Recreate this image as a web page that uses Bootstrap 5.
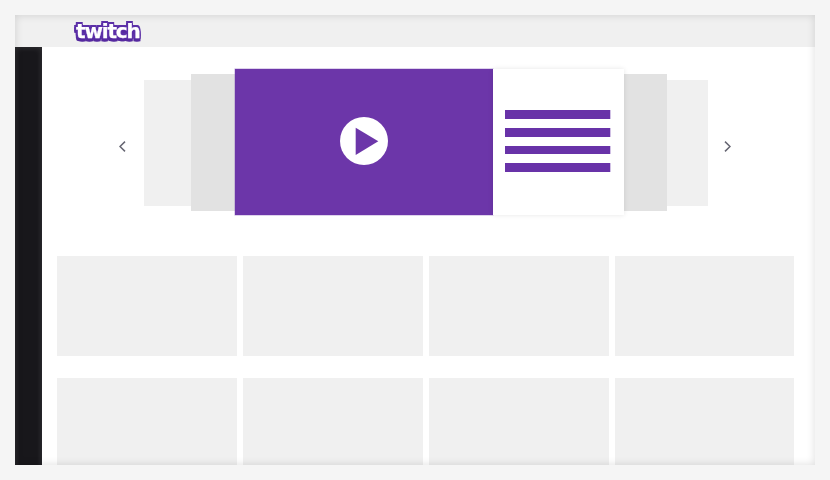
<!DOCTYPE html>
<html lang="en">
<head>
<meta charset="utf-8">
<title>Twitch</title>
<link href="https://cdn.jsdelivr.net/npm/bootstrap@5.3.0/dist/css/bootstrap.min.css" rel="stylesheet">
<style>
html,body{height:100%;}
body{background:#f5f5f5;padding:15px;overflow:hidden;font-family:"Liberation Sans",sans-serif;}
.frame{width:800px;height:450px;position:relative;overflow:hidden;background:#fff;}
.frame::after{content:"";position:absolute;inset:0;pointer-events:none;box-shadow:inset 0 0 8px rgba(0,0,0,.14);z-index:5;}
.topbar{height:32px;background:#f0f0f0;padding-left:61px;}
.brand{display:inline-block;font:900 20px/20px "DejaVu Sans",sans-serif;letter-spacing:-1.15px;color:#fff;-webkit-text-stroke:.25px #fff;margin-top:6px;filter:drop-shadow(1.7px 0 0 #5c30a8) drop-shadow(-1.7px 0 0 #5c30a8) drop-shadow(0 -1.7px 0 #5c30a8) drop-shadow(0 3.4px 0 #55299f);}
.side{width:27px;background:#18171b;box-shadow:inset 0 0 6px rgba(255,255,255,.14);}
.main-pane{padding:22px 20px 0 15px;min-width:0;}
.slider{padding-left:62px;height:146px;}
.chev{width:7px;height:11px;flex:none;margin-top:71.5px;}
.chev-l{margin-right:18px;}
.chev-r{margin-left:16px;}
.far{height:126px;margin-top:11px;background:#f0f0f0;}
.near{height:137.5px;margin-top:4.7px;background:#e2e2e2;}
.w47{width:47px}.w44{width:44px}.w43{width:43px}.w41{width:41px}
.video{width:258px;height:146px;background:#6c36a9;padding-bottom:1.4px;box-shadow:0 0 0 .5px rgba(108,54,169,.45);position:relative;}
.info{width:131px;height:146px;background:#fff;box-shadow:0 0 5px rgba(0,0,0,.1);padding:0 2px 2px 0;gap:9px;position:relative;}
.line{width:105px;height:8.7px;background:#6832a8;box-shadow:1px 0 0 rgba(104,50,168,.3);}
.tiles{display:grid;grid-template-columns:repeat(4,179.85px);column-gap:6px;row-gap:22px;margin-top:41px;}
.tile{height:100px;background:#f0f0f0;}
</style>
</head>
<body>
<div class="frame d-flex flex-column">
  <div class="topbar flex-shrink-0"><span class="brand">twitch</span></div>
  <div class="d-flex flex-grow-1">
    <div class="side flex-shrink-0"></div>
    <div class="main-pane flex-grow-1">
      <div class="slider d-flex align-items-start">
        <svg class="chev chev-l" viewBox="0 0 7 11"><polyline points="6,.6 1,5.5 6,10.4" fill="none" stroke="#666672" stroke-width="1.5"/></svg>
        <div class="far w47"></div>
        <div class="near w44"></div>
        <div class="video d-flex align-items-center justify-content-center">
          <svg width="48" height="48" viewBox="0 0 48 48"><circle cx="24" cy="24" r="24" fill="#fff"/><polygon points="15.7,10.7 38.3,24.3 15.7,38" fill="#6c36a9"/></svg>
        </div>
        <div class="info d-flex flex-column align-items-center justify-content-center">
          <div class="line"></div><div class="line"></div><div class="line"></div><div class="line"></div>
        </div>
        <div class="near w43"></div>
        <div class="far w41"></div>
        <svg class="chev chev-r" viewBox="0 0 7 11"><polyline points="1,.6 6,5.5 1,10.4" fill="none" stroke="#666672" stroke-width="1.5"/></svg>
      </div>
      <div class="tiles">
        <div class="tile"></div><div class="tile"></div><div class="tile"></div><div class="tile"></div>
        <div class="tile"></div><div class="tile"></div><div class="tile"></div><div class="tile"></div>
      </div>
    </div>
  </div>
</div>
<script src="https://cdn.jsdelivr.net/npm/bootstrap@5.3.0/dist/js/bootstrap.bundle.min.js"></script>
</body>
</html>
